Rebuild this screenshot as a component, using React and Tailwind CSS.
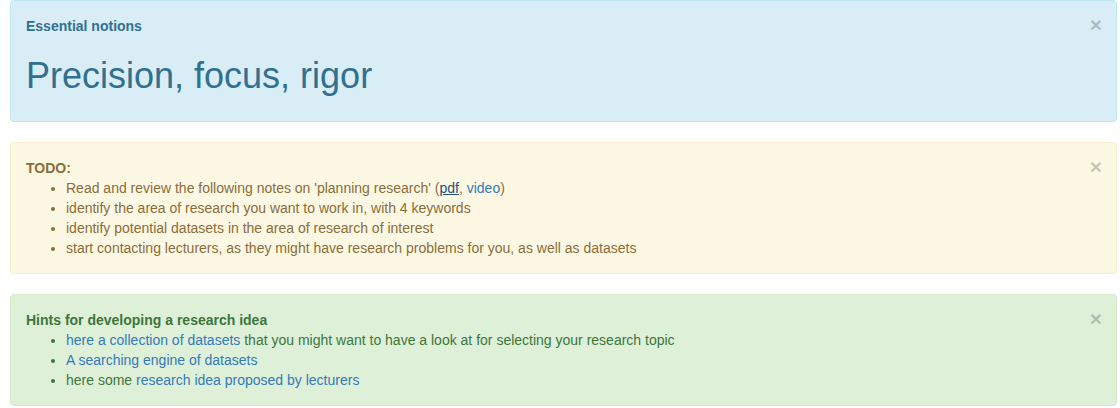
export default function App() {
  const close = (
    <button
      type="button"
      className="absolute top-[13px] right-[14px] text-[21px] font-bold leading-none text-black opacity-20 [text-shadow:0_1px_0_#fff]"
    >
      ×
    </button>
  );
  return (
    <div className="bg-white min-h-[408px] pl-[10px] font-['Liberation_Sans',Arial,sans-serif] text-[14px] leading-[20px]">
      <div className="w-[1107px]">
        <div className="relative mb-[20px] rounded-[4px] border border-[#bce8f1] bg-[#d9edf7] py-[15px] pl-[15px] pr-[35px] text-[#31708f]">
          {close}
          <div className="font-bold">Essential notions</div>
          <h1 className="mt-[20px] mb-[10px] text-[36px] leading-[1.1] font-normal">Precision, focus, rigor</h1>
        </div>

        <div className="relative mb-[20px] rounded-[4px] border border-[#faebcc] bg-[#fcf8e3] py-[15px] pl-[15px] pr-[35px] text-[#8a6d3b]">
          {close}
          <div className="font-bold">TODO:</div>
          <ul className="list-disc pl-[40px]">
            <li>
              Read and review the following notes on 'planning research' (
              <a href="#" className="text-[#23527c] underline">pdf</a>,{" "}
              <a href="#" className="text-[#337ab7]">video</a>)
            </li>
            <li>identify the area of research you want to work in, with 4 keywords</li>
            <li>identify potential datasets in the area of research of interest</li>
            <li>start contacting lecturers, as they might have research problems for you, as well as datasets</li>
          </ul>
        </div>

        <div className="relative rounded-[4px] border border-[#d6e9c6] bg-[#dff0d8] py-[15px] pl-[15px] pr-[35px] text-[#3c763d]">
          {close}
          <div className="font-bold">Hints for developing a research idea</div>
          <ul className="list-disc pl-[40px]">
            <li>
              <a href="#" className="text-[#337ab7]">here a collection of datasets</a> that you might want to have a look at for selecting your research topic
            </li>
            <li>
              <a href="#" className="text-[#337ab7]">A searching engine of datasets</a>
            </li>
            <li>
              here some <a href="#" className="text-[#337ab7]">research idea proposed by lecturers</a>
            </li>
          </ul>
        </div>
      </div>
    </div>
  );
}
